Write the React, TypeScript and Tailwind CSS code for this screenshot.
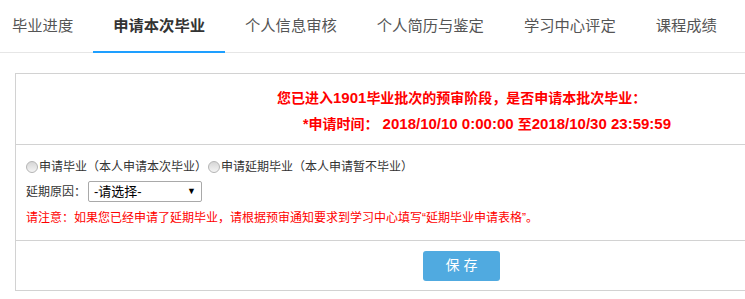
import { useState } from "react";

const tabs = ["毕业进度", "申请本次毕业", "个人信息审核", "个人简历与鉴定", "学习中心评定", "课程成绩"];

function Radio({ checked, onClick }: { checked: boolean; onClick: () => void }) {
  return (
    <span
      onClick={onClick}
      className="inline-block w-[12px] h-[12px] rounded-full border border-[#b5b5b5] bg-gradient-to-b from-[#d6d6d6] to-[#f4f4f4] mr-[1px] shrink-0 cursor-pointer"
    >
      {checked && <span className="block w-[6px] h-[6px] m-[2px] rounded-full bg-[#333]" />}
    </span>
  );
}

export default function App() {
  const [active, setActive] = useState(1);
  const [choice, setChoice] = useState<number | null>(null);

  return (
    <div
      className="w-[745px] h-[299px] overflow-hidden bg-white"
      style={{ fontFamily: '"Liberation Sans", "Noto Sans CJK SC", sans-serif' }}
    >
      {/* tabs */}
      <div className="flex h-[53px] border-b border-[#e6e6e6] ml-[-8px]">
        {tabs.map((t, i) => (
          <div
            key={t}
            onClick={() => setActive(i)}
            className={`relative h-full px-[20px] flex items-center text-[15.3px] cursor-pointer whitespace-nowrap ${
              active === i ? "text-[#333] font-bold" : "text-[#555]"
            }`}
          >
            {t}
            {active === i && (
              <span className="absolute left-0 right-0 bottom-[-1px] h-[2px] bg-[#1e9fff]" />
            )}
          </div>
        ))}
      </div>

      {/* box */}
      <div className="mt-[20px] ml-[15px] w-[893px] border border-[#d2d2d2]">
        <div className="h-[70px] pt-[11px] text-[14px] font-bold text-[#ff0000] leading-[25px] whitespace-nowrap">
          <div className="pl-[261px]">
            您已进入<span className="text-[15px]">1901</span>毕业批次的预审阶段，是否申请本批次毕业：
          </div>
          <div className="pl-[287px]">
            *申请时间：<span className="text-[15px]"> 2018/10/10 0:00:00 </span>至
            <span className="text-[15px]">2018/10/30 23:59:59</span>
          </div>
        </div>

        <div className="border-t border-[#d2d2d2] px-[10px] pt-[12px] pb-[12px] text-[12px] text-[#333]">
          <div className="flex items-center h-[20px] whitespace-nowrap">
            <Radio checked={choice === 0} onClick={() => setChoice(0)} />
            <span>申请毕业（本人申请本次毕业）</span>
            <span className="ml-[1px]" />
            <Radio checked={choice === 1} onClick={() => setChoice(1)} />
            <span>申请延期毕业（本人申请暂不毕业）</span>
          </div>
          <div className="flex items-center mt-[4px] h-[21px]">
            <span>延期原因：</span>
            <div className="ml-[2px] w-[114px] h-[21px] border border-[#a9a9a9] rounded-[2px] flex items-center justify-between pl-[5px] pr-[5px] text-[13px] text-black">
              <span>-请选择-</span>
              <span className="text-[9px]">▼</span>
            </div>
          </div>
          <div className="mt-[6px] h-[20px] leading-[20px] text-[#ff0000] whitespace-nowrap">
            请注意：如果您已经申请了延期毕业，请根据预审通知要求到学习中心填写“延期毕业申请表格”。
          </div>
        </div>

        <div className="border-t border-[#d2d2d2] h-[50px] flex items-center justify-center">
          <button className="w-[77px] h-[30px] rounded-[3px] bg-[#50aae0] text-white text-[14px] tracking-[4px] pl-[4px]">
            保存
          </button>
        </div>
      </div>
    </div>
  );
}
